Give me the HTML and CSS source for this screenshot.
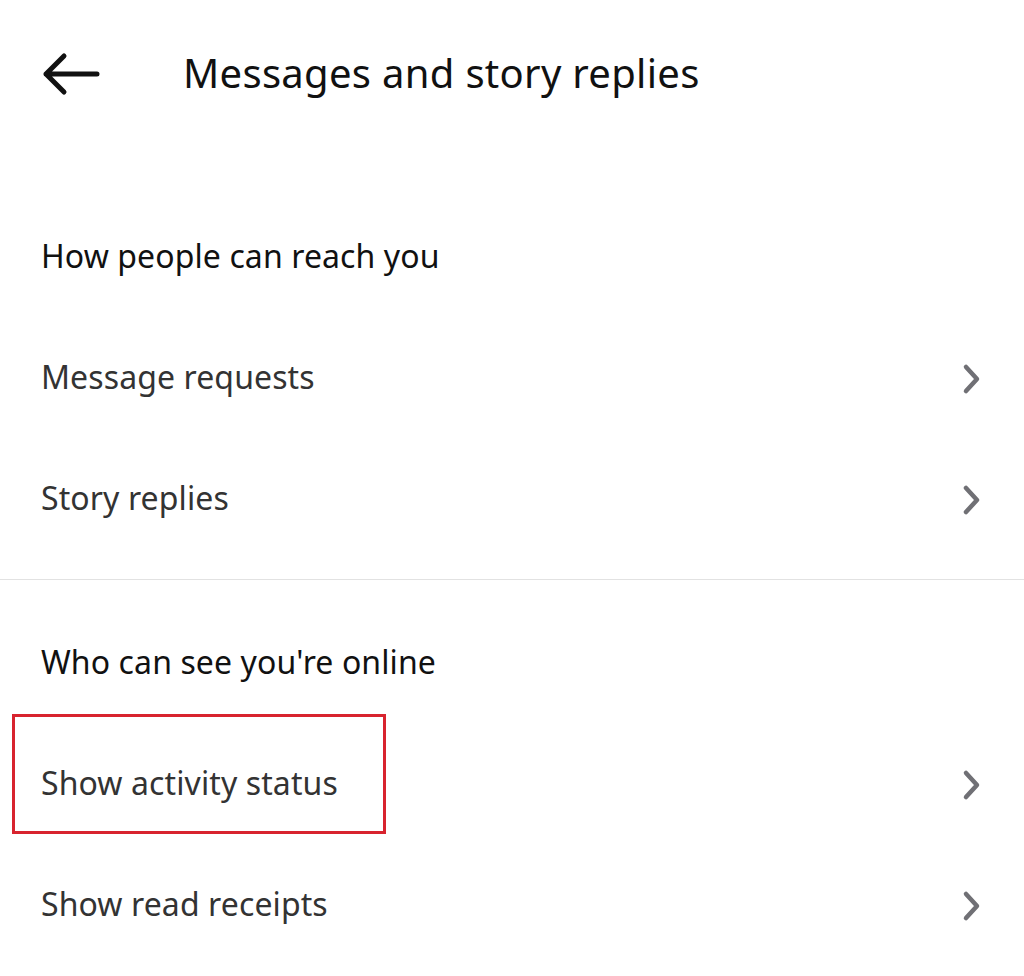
FILE: index.html
```html
<!DOCTYPE html>
<html lang="en">
<head>
    <meta charset="UTF-8">
    <meta name="viewport" content="width=device-width, initial-scale=1.0">
    <title>Messages and story replies</title>
    <link rel="stylesheet" href="styles.css">
</head>
<body>
    <div class="page">
        <!-- 상단 헤더 -->
        <header class="top">
            <svg class="back" viewBox="0 0 60 44">
                <path d="M56 22 H5 M23 4 L5 22 L23 40"></path>
            </svg>
            <h1 class="title">Messages and story replies</h1>
        </header>

        <!-- 1. 연락 방법 -->
        <section class="group">
            <h2 class="group-head">How people can reach you</h2>
            <div class="row">
                <span>Message requests</span>
                <svg class="chev" viewBox="0 0 20 32"><path d="M4 4 L15 16 L4 28"></path></svg>
            </div>
            <div class="row">
                <span>Story replies</span>
                <svg class="chev" viewBox="0 0 20 32"><path d="M4 4 L15 16 L4 28"></path></svg>
            </div>
        </section>

        <hr class="divider">

        <!-- 2. 온라인 상태 -->
        <section class="group">
            <h2 class="group-head">Who can see you're online</h2>
            <div class="row">
                <span>Show activity status</span>
                <svg class="chev" viewBox="0 0 20 32"><path d="M4 4 L15 16 L4 28"></path></svg>
                <div class="mark"></div>
            </div>
            <div class="row">
                <span>Show read receipts</span>
                <svg class="chev" viewBox="0 0 20 32"><path d="M4 4 L15 16 L4 28"></path></svg>
            </div>
        </section>
    </div>
</body>
</html>
```

FILE: styles.css
```css
html,body{
    margin: 0;
    padding: 0;
    background: #fff;
}
body{
    font-family: "Noto Sans", "Open Sans", sans-serif;
    color: #161616;
}
.page{
    display: flex;
    flex-direction: column;
    width: 1024px;
}

/* 헤더 */
.top{
    display: flex;
    align-items: center;
    height: 148px;
    padding-left: 41px;
}
.back{
    width: 60px;
    height: 44px;
    flex-shrink: 0;
}
.back path{
    fill: none;
    stroke: #111;
    stroke-width: 5;
    stroke-linecap: round;
    stroke-linejoin: round;
}
.title{
    margin: 0 0 4px 82px;
    font-size: 40px;
    font-weight: 400;
    color: #111;
    letter-spacing: 0.3px;
}

/* 그룹 */
.group{
    display: flex;
    flex-direction: column;
}
.group:first-of-type{
    padding-top: 49px;
}
.group-head{
    display: flex;
    align-items: center;
    box-sizing: border-box;
    height: 121px;
    margin: 0;
    padding: 0 0 4px 41px;
    font-size: 32px;
    font-weight: 400;
    color: #111;
    letter-spacing: 0.1px;
}
.row{
    position: relative;
    display: flex;
    align-items: center;
    justify-content: space-between;
    box-sizing: border-box;
    height: 121px;
    padding: 0 42px 0 41px;
    font-size: 32px;
    color: #333;
    letter-spacing: 0.1px;
}
.row span{
    padding-bottom: 4px;
}
.chev{
    width: 20px;
    height: 32px;
}
.chev path{
    fill: none;
    stroke: #707075;
    stroke-width: 4.5;
    stroke-linecap: round;
    stroke-linejoin: round;
}

.divider{
    margin: 19px 0 23px;
    border: 0;
    border-top: 1px solid #e2e2e2;
}

/* 강조 표시 박스 */
.mark{
    position: absolute;
    left: 12px;
    top: -10px;
    width: 368px;
    height: 114px;
    border: 3px solid #d8232e;
}
```
